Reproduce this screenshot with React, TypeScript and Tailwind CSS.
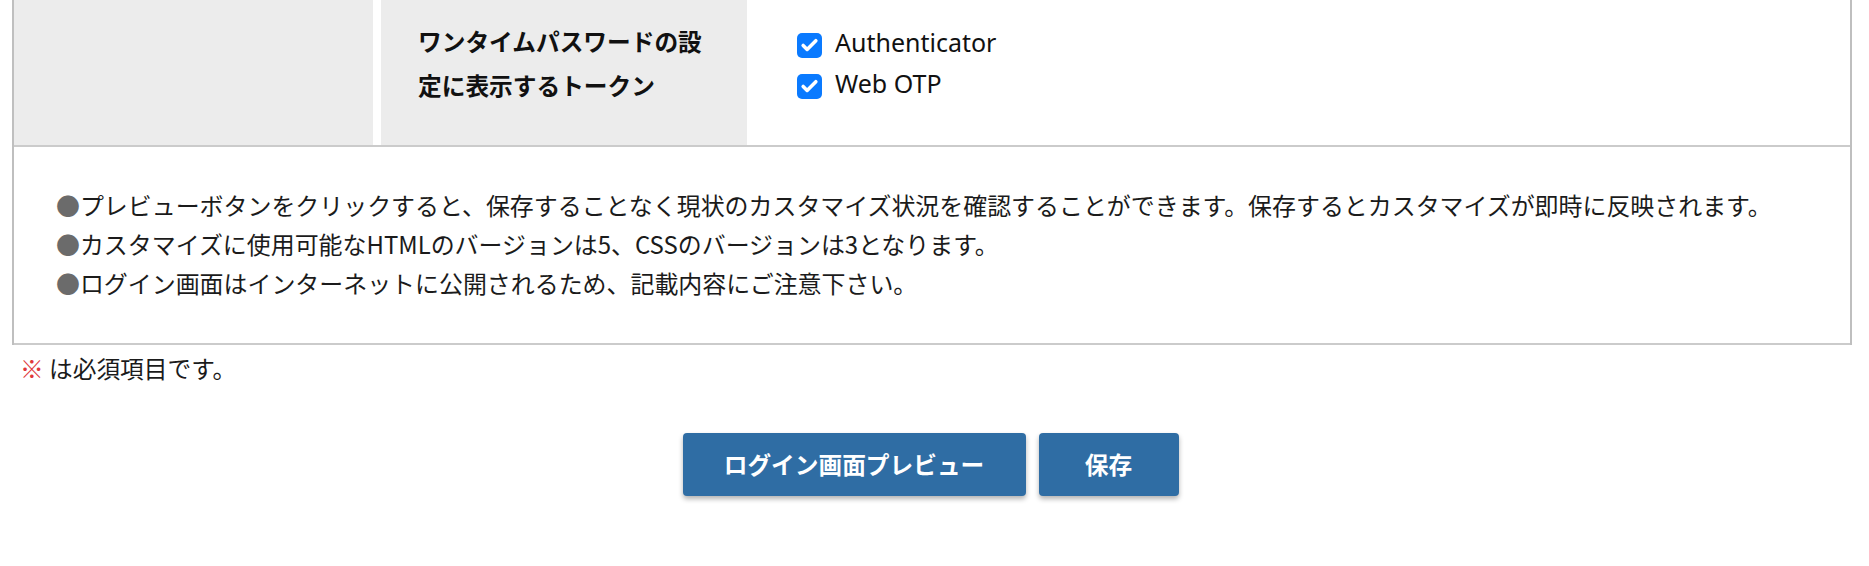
import { Check } from "lucide-react";

const jp = "font-['Noto_Sans_CJK_JP',sans-serif]";

const notes = [
  "プレビューボタンをクリックすると、保存することなく現状のカスタマイズ状況を確認することができます。保存するとカスタマイズが即時に反映されます。",
  "カスタマイズに使用可能なHTMLのバージョンは5、CSSのバージョンは3となります。",
  "ログイン画面はインターネットに公開されるため、記載内容にご注意下さい。",
];

function CheckItem({ label }: { label: string }) {
  return (
    <label className="flex items-start gap-[13px] h-[41px]">
      <span className="mt-[11px] flex h-[25px] w-[25px] items-center justify-center rounded-[5px] bg-[#0a7aff]">
        <Check className="h-[19px] w-[19px] text-white" strokeWidth={4.5} />
      </span>
      <span className="font-['Noto_Sans','Noto_Sans_CJK_JP',sans-serif] text-[25px] leading-[41px] text-[#111]">
        {label}
      </span>
    </label>
  );
}

function App() {
  return (
    <div className={`min-h-[566px] bg-white ${jp} text-[#1b1b1b]`}>
      <div className="ml-[12px] w-[1840px]">
        <div className="border-x-2 border-[#bfbfbf]">
          <div className="flex h-[147px] border-b-2 border-[#cbcbcb]">
            <div className="w-[359px] bg-[#ececec]" />
            <div className="w-[8px] bg-white" />
            <div className="w-[366px] bg-[#ececec] px-[37px] pt-[19px]">
              <p className="text-[23.7px] font-bold leading-[44px] text-[#111]">
                ワンタイムパスワードの設定に表示するトークン
              </p>
            </div>
            <div className="flex flex-1 flex-col bg-white pl-[50px] pt-[22px]">
              <CheckItem label="Authenticator" />
              <CheckItem label="Web OTP" />
            </div>
          </div>
          <div className="border-b-2 border-[#cbcbcb] pl-[42px] pt-[38px] pb-[41px]">
            {notes.map((n) => (
              <p key={n} className="text-[23.95px] leading-[39px] whitespace-nowrap">
                <span className="text-[#6b6b6b]">●</span>
                {n}
              </p>
            ))}
          </div>
        </div>
        <p className="ml-[8px] mt-[7px] text-[23.7px] leading-[32px] text-[#1b1b1b]">
          <span className="text-[#e0383a]">※</span> は必須項目です。
        </p>
        <div className="mt-[49px] flex justify-center gap-[13px] pr-[3px]">
          <button className="h-[63px] w-[343px] rounded-[4px] bg-[#2f6da4] text-[23.7px] font-bold text-white shadow-[0_3px_5px_rgba(0,0,0,0.3)]">
            ログイン画面プレビュー
          </button>
          <button className="h-[63px] w-[140px] rounded-[4px] bg-[#2f6da4] text-[23.7px] font-bold text-white shadow-[0_3px_5px_rgba(0,0,0,0.3)]">
            保存
          </button>
        </div>
      </div>
    </div>
  );
}

export default App;
